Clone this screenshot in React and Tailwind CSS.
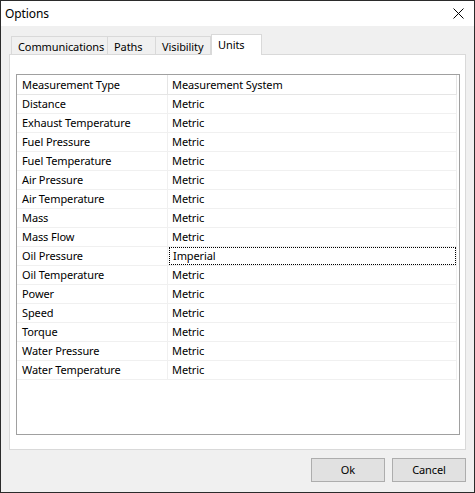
import React from 'react';

const rows = [
  ['Distance', 'Metric'],
  ['Exhaust Temperature', 'Metric'],
  ['Fuel Pressure', 'Metric'],
  ['Fuel Temperature', 'Metric'],
  ['Air Pressure', 'Metric'],
  ['Air Temperature', 'Metric'],
  ['Mass', 'Metric'],
  ['Mass Flow', 'Metric'],
  ['Oil Pressure', 'Imperial'],
  ['Oil Temperature', 'Metric'],
  ['Power', 'Metric'],
  ['Speed', 'Metric'],
  ['Torque', 'Metric'],
  ['Water Pressure', 'Metric'],
  ['Water Temperature', 'Metric'],
];

const tabs = [
  { name: 'Communications', w: 'w-[97px]' },
  { name: 'Paths', w: 'w-[48px]' },
  { name: 'Visibility', w: 'w-[55px]' },
];

const App = () => {
  return (
    <div
      className="w-[475px] h-[493px] bg-[#f0f0f0] border border-[#2b2b2b] flex flex-col text-[11px] tracking-[-0.1px] text-black"
      style={{ fontFamily: '"Noto Sans", "Open Sans", sans-serif' }}
    >
      {/* Title bar */}
      <div className="h-[25px] bg-white flex items-center justify-between pl-[4px] pr-[10px] shrink-0">
        <span className="text-[12px] leading-none">Options</span>
        <svg width="11" height="11" viewBox="0 0 11 11" className="text-black">
          <path d="M0.5 0.5 L10.5 10.5 M10.5 0.5 L0.5 10.5" stroke="currentColor" strokeWidth="1" />
        </svg>
      </div>

      <div className="flex-1 flex flex-col px-[8px] pt-[8px]">
        {/* Tabs */}
        <div className="flex items-end h-[20px] pl-[2px]">
          {tabs.map((t, i) => (
            <div
              key={t.name}
              className={`${t.w} h-[18px] border-t border-r border-[#d9d9d9] ${i === 0 ? 'border-l' : ''} flex items-center pl-[6px] pt-[1px] leading-none`}
            >
              {t.name}
            </div>
          ))}
          <div className="w-[51px] h-[21px] -mb-px bg-white border border-b-0 border-[#d9d9d9] flex items-start pt-[4px] pl-[6px] leading-none relative z-10">
            Units
          </div>
        </div>

        {/* Panel */}
        <div className="h-[396px] bg-white border border-[#d9d9d9] pt-[19px] pl-[6px]">
          <div className="w-[444px] h-[361px] border border-[#a0a0a0] bg-white">
            <div className="w-[440px]">
              <div className="flex h-[20px] border-b border-[#e5e5e5] leading-none">
                <div className="w-[151px] border-r border-[#e5e5e5] pl-[5px] flex items-center">Measurement Type</div>
                <div className="flex-1 pl-[4px] flex items-center border-r border-[#e5e5e5]">Measurement System</div>
              </div>
              {rows.map(([name, sys]) => (
                <div key={name} className="flex h-[19px] border-b border-[#f0f0f0] leading-none">
                  <div className="w-[151px] border-r border-[#f0f0f0] pl-[5px] pb-[1px] flex items-center">{name}</div>
                  <div className="flex-1 border-r border-[#f0f0f0] flex items-stretch">
                    {sys === 'Imperial' ? (
                      <div className="flex-1 ml-[1px] border border-dotted border-black flex items-center pl-[3px] pb-[1px]">
                        {sys}
                      </div>
                    ) : (
                      <div className="flex-1 flex items-center pl-[4px] pb-[1px]">{sys}</div>
                    )}
                  </div>
                </div>
              ))}
            </div>
          </div>
        </div>

        {/* Buttons */}
        <div className="flex justify-end gap-[7px] mt-[8px]">
          <button className="w-[74px] h-[24px] bg-[#e1e1e1] border border-[#adadad] leading-none pb-[1px]">Ok</button>
          <button className="w-[74px] h-[24px] bg-[#e1e1e1] border border-[#adadad] leading-none pb-[1px]">Cancel</button>
        </div>
      </div>
    </div>
  );
};

export default App;
